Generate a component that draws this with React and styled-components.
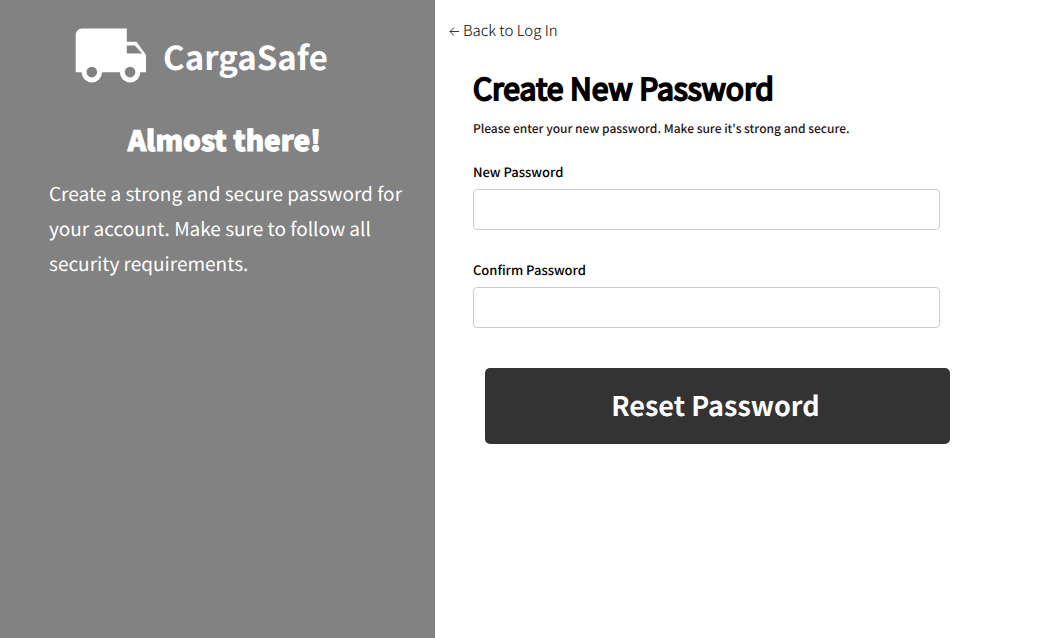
import React from 'react';
import styled, { createGlobalStyle } from 'styled-components';

const GlobalStyle = createGlobalStyle`
  *, *::before, *::after { box-sizing: border-box; }
  body {
    margin: 0;
    background: #fff;
    color: #000;
    font-family: "Noto Sans CJK SC", sans-serif;
    text-rendering: geometricPrecision;
  }
`;

const Page = styled.div`
  display: flex;
  min-height: 100vh;
`;

const Aside = styled.aside`
  flex: 0 0 41.3%;
  padding: 28px 32px 32px 49px;
  background: #828282;
  color: #fff;
`;

const Brand = styled.div`
  display: flex;
  align-items: center;
  gap: 16px;
  padding-left: 26px;
`;

const Truck = styled.svg`
  width: 72px;
  height: 56px;
  fill: #fff;
`;

const BrandName = styled.span`
  font-size: 33px;
  line-height: 56px;
  font-weight: 700;
`;

const AsideTitle = styled.h2`
  margin: 36px 0 16px;
  padding-right: 3px;
  font-size: 28px;
  line-height: 40px;
  font-weight: 900;
  text-align: center;
  -webkit-text-stroke: 1px currentColor;
`;

const AsideText = styled.p`
  margin: 0;
  font-size: 19px;
  line-height: 35px;
  font-weight: 400;
`;

const Main = styled.main`
  flex: 1;
  min-width: 0;
  padding: 17px 14px;
`;

const BackLink = styled.a`
  display: inline-flex;
  align-items: center;
  gap: 4px;
  color: #000;
  font-size: 15px;
  line-height: 24px;
  font-weight: 300;
  text-decoration: none;
`;

const Arrow = styled.svg`
  width: 10px;
  height: 10px;
  fill: none;
  stroke: currentColor;
  stroke-width: 0.8;
`;

const Form = styled.form`
  padding: 20px 89px 0 24px;
`;

const Title = styled.h1`
  margin: 0;
  font-size: 30px;
  line-height: 48px;
  font-weight: 400;
  -webkit-text-stroke: 2px currentColor;
`;

const Intro = styled.p`
  margin: 8px 0 23px;
  color: #2a1414;
  font-size: 12px;
  line-height: 20px;
  font-weight: 500;
`;

const Field = styled.div`
  display: flex;
  flex-direction: column;
  gap: 7px;
  margin: 0 10px 30px 0;
`;

const Label = styled.label`
  font-size: 13px;
  line-height: 20px;
  font-weight: 500;
`;

const Input = styled.input`
  width: 100%;
  height: 41px;
  padding: 0 12px;
  border: 1px solid #ccc;
  border-radius: 4px;
  font: inherit;
`;

const Actions = styled.div`
  display: flex;
  padding: 10px 0 0 12px;
`;

const Submit = styled.button`
  flex: 1;
  height: 76px;
  padding: 0 4px 4px 0;
  border: 0;
  border-radius: 5px;
  background: #333;
  color: #fff;
  font-family: inherit;
  font-size: 27px;
  font-weight: 700;
  text-rendering: inherit;
`;

export default function App() {
  return (
    <Page>
      <GlobalStyle />
      <Aside>
        <Brand>
          <Truck viewBox="0 0 72 56" aria-hidden="true">
            <path
              fillRule="evenodd"
              d="M7 .5H51.8V13.7H61.5L71 27V44.3H65.3A10.2 10.2 0 0 1 44.9 44.3H27A10.2 10.2 0 0 1 6.6 44.3H.7V7A6.4 6.4 0 0 1 7 .5ZM51.8 17.5V25.5H67.2L59.8 17.5ZM16.8 38.8A5.3 5.3 0 1 0 16.8 49.4A5.3 5.3 0 1 0 16.8 38.8ZM55.1 38.8A5.3 5.3 0 1 0 55.1 49.4A5.3 5.3 0 1 0 55.1 38.8Z"
            />
          </Truck>
          <BrandName>CargaSafe</BrandName>
        </Brand>
        <AsideTitle>Almost there!</AsideTitle>
        <AsideText>
          Create a strong and secure password for your account. Make sure to follow all security requirements.
        </AsideText>
      </Aside>
      <Main>
        <BackLink href="#login">
          <Arrow viewBox="0 0 10 10" aria-hidden="true">
            <path d="M10 5.5H1M5 1.5L1 5.5L5 9.5" />
          </Arrow>
          Back to Log In
        </BackLink>
        <Form>
          <Title>Create New Password</Title>
          <Intro>Please enter your new password. Make sure it's strong and secure.</Intro>
          <Field>
            <Label htmlFor="new-password">New Password</Label>
            <Input id="new-password" type="password" />
          </Field>
          <Field>
            <Label htmlFor="confirm-password">Confirm Password</Label>
            <Input id="confirm-password" type="password" />
          </Field>
          <Actions>
            <Submit type="submit">Reset Password</Submit>
          </Actions>
        </Form>
      </Main>
    </Page>
  );
}
